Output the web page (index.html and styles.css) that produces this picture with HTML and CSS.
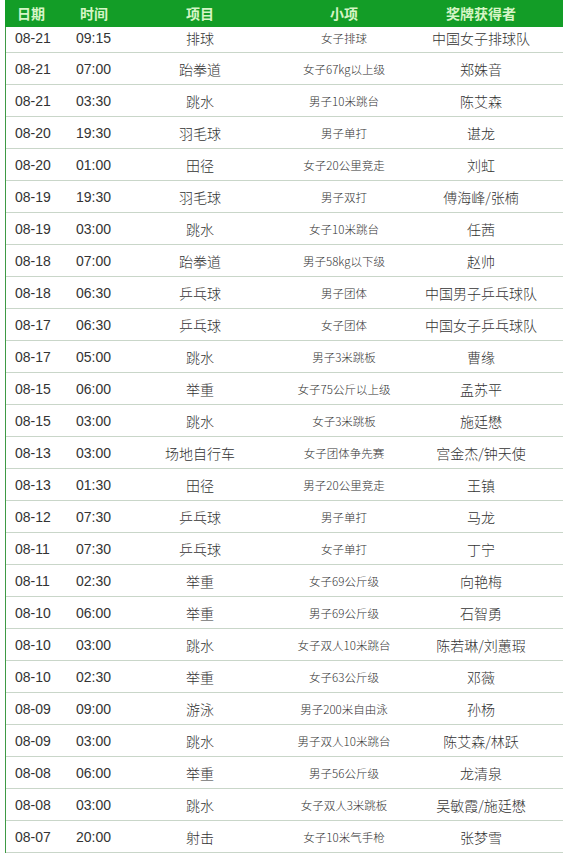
FILE: index.html
```html
<!DOCTYPE html>
<html lang="zh-CN">
<head>
<meta charset="utf-8">
<title>奖牌获得者</title>
<link rel="stylesheet" href="styles.css">
</head>
<body>
<div class="wrap">
  <div class="head">
    <div class="h h-date">日期</div>
    <div class="h h-time">时间</div>
    <div class="h h-c">项目</div>
    <div class="h h-c">小项</div>
    <div class="h h-c h-win">奖牌获得者</div>
  </div>
  <div class="body">
    <div class="row first"><div class="c date">08-21</div><div class="c time">09:15</div><div class="c item">排球</div><div class="c sub">女子排球</div><div class="c win">中国女子排球队</div></div>
    <div class="row"><div class="c date">08-21</div><div class="c time">07:00</div><div class="c item">跆拳道</div><div class="c sub">女子67kg以上级</div><div class="c win">郑姝音</div></div>
    <div class="row"><div class="c date">08-21</div><div class="c time">03:30</div><div class="c item">跳水</div><div class="c sub">男子10米跳台</div><div class="c win">陈艾森</div></div>
    <div class="row"><div class="c date">08-20</div><div class="c time">19:30</div><div class="c item">羽毛球</div><div class="c sub">男子单打</div><div class="c win">谌龙</div></div>
    <div class="row"><div class="c date">08-20</div><div class="c time">01:00</div><div class="c item">田径</div><div class="c sub">女子20公里竞走</div><div class="c win">刘虹</div></div>
    <div class="row"><div class="c date">08-19</div><div class="c time">19:30</div><div class="c item">羽毛球</div><div class="c sub">男子双打</div><div class="c win">傅海峰/张楠</div></div>
    <div class="row"><div class="c date">08-19</div><div class="c time">03:00</div><div class="c item">跳水</div><div class="c sub">女子10米跳台</div><div class="c win">任茜</div></div>
    <div class="row"><div class="c date">08-18</div><div class="c time">07:00</div><div class="c item">跆拳道</div><div class="c sub">男子58kg以下级</div><div class="c win">赵帅</div></div>
    <div class="row"><div class="c date">08-18</div><div class="c time">06:30</div><div class="c item">乒乓球</div><div class="c sub">男子团体</div><div class="c win">中国男子乒乓球队</div></div>
    <div class="row"><div class="c date">08-17</div><div class="c time">06:30</div><div class="c item">乒乓球</div><div class="c sub">女子团体</div><div class="c win">中国女子乒乓球队</div></div>
    <div class="row"><div class="c date">08-17</div><div class="c time">05:00</div><div class="c item">跳水</div><div class="c sub">男子3米跳板</div><div class="c win">曹缘</div></div>
    <div class="row"><div class="c date">08-15</div><div class="c time">06:00</div><div class="c item">举重</div><div class="c sub">女子75公斤以上级</div><div class="c win">孟苏平</div></div>
    <div class="row"><div class="c date">08-15</div><div class="c time">03:00</div><div class="c item">跳水</div><div class="c sub">女子3米跳板</div><div class="c win">施廷懋</div></div>
    <div class="row"><div class="c date">08-13</div><div class="c time">03:00</div><div class="c item">场地自行车</div><div class="c sub">女子团体争先赛</div><div class="c win">宫金杰/钟天使</div></div>
    <div class="row"><div class="c date">08-13</div><div class="c time">01:30</div><div class="c item">田径</div><div class="c sub">男子20公里竞走</div><div class="c win">王镇</div></div>
    <div class="row"><div class="c date">08-12</div><div class="c time">07:30</div><div class="c item">乒乓球</div><div class="c sub">男子单打</div><div class="c win">马龙</div></div>
    <div class="row"><div class="c date">08-11</div><div class="c time">07:30</div><div class="c item">乒乓球</div><div class="c sub">女子单打</div><div class="c win">丁宁</div></div>
    <div class="row"><div class="c date">08-11</div><div class="c time">02:30</div><div class="c item">举重</div><div class="c sub">女子69公斤级</div><div class="c win">向艳梅</div></div>
    <div class="row"><div class="c date">08-10</div><div class="c time">06:00</div><div class="c item">举重</div><div class="c sub">男子69公斤级</div><div class="c win">石智勇</div></div>
    <div class="row"><div class="c date">08-10</div><div class="c time">03:00</div><div class="c item">跳水</div><div class="c sub">女子双人10米跳台</div><div class="c win">陈若琳/刘蕙瑕</div></div>
    <div class="row"><div class="c date">08-10</div><div class="c time">02:30</div><div class="c item">举重</div><div class="c sub">女子63公斤级</div><div class="c win">邓薇</div></div>
    <div class="row"><div class="c date">08-09</div><div class="c time">09:00</div><div class="c item">游泳</div><div class="c sub">男子200米自由泳</div><div class="c win">孙杨</div></div>
    <div class="row"><div class="c date">08-09</div><div class="c time">03:00</div><div class="c item">跳水</div><div class="c sub">男子双人10米跳台</div><div class="c win">陈艾森/林跃</div></div>
    <div class="row"><div class="c date">08-08</div><div class="c time">06:00</div><div class="c item">举重</div><div class="c sub">男子56公斤级</div><div class="c win">龙清泉</div></div>
    <div class="row"><div class="c date">08-08</div><div class="c time">03:00</div><div class="c item">跳水</div><div class="c sub">女子双人3米跳板</div><div class="c win">吴敏霞/施廷懋</div></div>
    <div class="row"><div class="c date">08-07</div><div class="c time">20:00</div><div class="c item">射击</div><div class="c sub">女子10米气手枪</div><div class="c win">张梦雪</div></div>
  </div>
</div>
</body>
</html>
```
FILE: styles.css
```css
html, body {
  margin: 0;
  padding: 0;
  background: #ffffff;
}
body {
  font-family: "Liberation Sans", "Noto Sans CJK SC", sans-serif;
  color: #333333;
  overflow: hidden;
}
.wrap {
  margin-left: 5px;
  width: 558px;
}
.head {
  display: grid;
  grid-template-columns: 59px 47px 178px 110px 164px;
  height: 27px;
  background: #139d27;
  align-items: center;
}
.h {
  font-family: "Noto Sans CJK SC", sans-serif;
  font-weight: 700;
  font-size: 14px;
  color: #d6f5c6;
  line-height: 27px;
  white-space: nowrap;
}
.h-date { padding-left: 12px; }
.h-time { padding-left: 16px; }
.h-c { text-align: center; }
.body {
  border-left: 1px solid #3f9a45;
}
.row {
  display: grid;
  grid-template-columns: 58px 47px 178px 110px 164px;
  height: 31px;
  border-bottom: 1px solid #c9d6c9;
  align-items: center;
}
.row.first {
  height: 22px;
  padding-bottom: 3px;
}
.c {
  font-size: 14px;
  line-height: 18px;
  white-space: nowrap;
}
.date { padding-left: 9px; }
.time { padding-left: 12px; }
.item, .win {
  text-align: center;
  font-family: "Noto Sans CJK SC", sans-serif;
  font-weight: 300;
  font-size: 14px;
}
.sub {
  text-align: center;
  font-family: "Noto Sans CJK SC", sans-serif;
  font-weight: 300;
  font-size: 11.5px;
}
```
